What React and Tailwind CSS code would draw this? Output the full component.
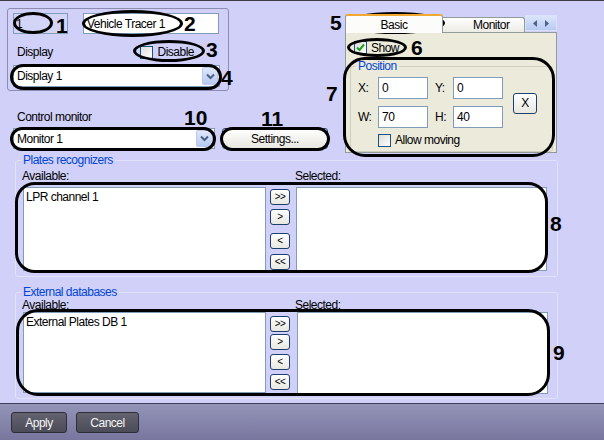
import React from "react";

function XPButton({ className = "", children }) {
  return (
    <div
      className={`flex items-center justify-center rounded-[3px] border border-[#1d3f6e] bg-gradient-to-b from-white to-[#e8e7e0] text-black ${className}`}
    >
      {children}
    </div>
  );
}

function Checkbox({ checked }) {
  return (
    <div className="w-[13px] h-[13px] shrink-0 border border-[#1c5180] bg-gradient-to-br from-[#dcdcd7] to-white flex items-center justify-center">
      {checked && (
        <svg width="9" height="9" viewBox="0 0 9 9">
          <path d="M1 4.5 L3.5 7 L8 1.5" stroke="#21a121" strokeWidth="2" fill="none" />
        </svg>
      )}
    </div>
  );
}

function DropBtn({ className = "" }) {
  return (
    <div
      className={`flex items-center justify-center rounded-[2px] border border-[#b9c9ef] bg-gradient-to-b from-[#dfe7fb] to-[#b8caf2] ${className}`}
    >
      <svg width="9" height="7" viewBox="0 0 9 7">
        <path d="M1 1.5 L4.5 5 L8 1.5" stroke="#4d6185" strokeWidth="2" fill="none" />
      </svg>
    </div>
  );
}

function Ring({ className = "" }) {
  return <div className={`absolute border-[3px] border-black pointer-events-none ${className}`} />;
}

function Num({ className = "", children }) {
  return (
    <div className={`absolute text-[21px] leading-none font-bold tracking-normal text-black ${className}`}>
      {children}
    </div>
  );
}

function ListButtons({ gaps }) {
  const labels = [">>", ">", "<", "<<"];
  return (
    <div className="flex flex-col w-[20px] ml-[4px]">
      <XPButton className={`h-[16px] text-[10px] ${gaps[0]}`}>{labels[0]}</XPButton>
      <XPButton className={`h-[16px] text-[10px] ${gaps[1]}`}>{labels[1]}</XPButton>
      <XPButton className={`h-[16px] text-[10px] ${gaps[2]}`}>{labels[2]}</XPButton>
      <XPButton className={`h-[16px] text-[10px] ${gaps[3]}`}>{labels[3]}</XPButton>
    </div>
  );
}

export default function App() {
  return (
    <div className="relative w-[604px] h-[442px] overflow-hidden bg-[#d0d0f8] text-[12px] leading-[14px] tracking-[-0.5px] text-black font-['Liberation_Sans',Arial,sans-serif]">
      <div className="h-px bg-[#3c3c48]" />

      {/* Top area */}
      <div className="flex h-[152px]">
        <div className="w-[345px] flex flex-col pl-[7px] pt-[7px]">
          {/* Name group */}
          <div className="w-[222px] h-[83px] border border-[#8c8cb0] rounded-[3px] px-[5px] pt-[4px]">
            <div className="flex">
              <div className="w-[55px] h-[21px] border border-[#7f9db9] bg-[#d4d4f8] pl-[2px] flex items-center">1</div>
              <div className="w-[136px] h-[21px] ml-[15px] border border-[#7f9db9] bg-white pl-[3px] flex items-center">
                Vehicle Tracer 1
              </div>
            </div>
            <div className="flex items-center h-[14px] mt-[11px]">
              <span className="pl-[4px]">Display</span>
              <div className="ml-auto mr-[29px] flex items-center">
                <Checkbox />
                <span className="ml-[4px]">Disable</span>
              </div>
            </div>
            <div className="mt-[6px] w-[207px] h-[22px] border border-[#7f9db9] bg-white flex items-center pl-[3px] pr-[1px]">
              <span className="flex-1">Display 1</span>
              <DropBtn className="w-[16px] h-[18px]" />
            </div>
          </div>

          <div className="mt-[19px] ml-[10px]">Control monitor</div>
          <div className="flex mt-[4px] ml-[6px]">
            <div className="w-[202px] h-[21px] border border-[#7f9db9] bg-white flex items-center pl-[3px] pr-[1px]">
              <span className="flex-1">Monitor 1</span>
              <DropBtn className="w-[17px] h-[17px]" />
            </div>
            <XPButton className="ml-[7px] w-[106px] h-[21px]">Settings...</XPButton>
          </div>
        </div>

        {/* Tab control */}
        <div className="w-[212px] mt-[13px] flex flex-col">
          <div className="flex items-start h-[18px]">
            <div className="relative z-10 w-[98px] h-[19px] bg-[#fcfcfa] border-x border-[#919b9c] border-t-[2px] border-t-[#f0a830] rounded-t-[3px] flex items-center justify-center">
              Basic
            </div>
            <div className="mt-[3px] w-[82px] h-[15px] bg-gradient-to-b from-white to-[#ecebe5] border-t border-r border-[#919b9c] rounded-tr-[3px] flex items-center pl-[30px]">
              Monitor
            </div>
            <div className="mt-[1px] w-[32px] h-[16px] border border-[#d8e2f8] bg-gradient-to-b from-[#dbe5fb] to-[#b7cbf3] flex items-center justify-center gap-[8px]">
              <svg width="4" height="7" viewBox="0 0 4 7"><path d="M4 0 L0 3.5 L4 7 Z" fill="#4d6185" /></svg>
              <svg width="4" height="7" viewBox="0 0 4 7"><path d="M0 0 L4 3.5 L0 7 Z" fill="#4d6185" /></svg>
            </div>
          </div>
          <div className="h-[125px] border border-[#919b9c] bg-[#eceadb] pl-[4px] pt-[8px]">
            <div className="flex items-center h-[13px] ml-[4px]">
              <Checkbox checked />
              <span className="ml-[4px]">Show</span>
            </div>
            <fieldset className="mt-[5px] w-[203px] h-[93px] border border-[#d0d0bf] rounded-[3px]">
              <legend className="ml-[5px] px-[2px] text-[#0046d5]">Position</legend>
              <div className="flex items-center mt-[4px] pl-[7px]">
                <div className="flex flex-col">
                  <div className="flex items-center">
                    <span className="w-[20px]">X:</span>
                    <div className="w-[50px] h-[22px] border border-[#7f9db9] bg-white pl-[3px] flex items-center">0</div>
                    <span className="w-[18px] ml-[7px]">Y:</span>
                    <div className="w-[50px] h-[22px] border border-[#7f9db9] bg-white pl-[3px] flex items-center">0</div>
                  </div>
                  <div className="flex items-center mt-[7px]">
                    <span className="w-[20px]">W:</span>
                    <div className="w-[50px] h-[22px] border border-[#7f9db9] bg-white pl-[3px] flex items-center">70</div>
                    <span className="w-[18px] ml-[7px]">H:</span>
                    <div className="w-[50px] h-[22px] border border-[#7f9db9] bg-white pl-[3px] flex items-center">40</div>
                  </div>
                </div>
                <XPButton className="ml-[10px] w-[24px] h-[21px] mt-[1px]">X</XPButton>
              </div>
              <div className="flex items-center mt-[5px] pl-[27px]">
                <Checkbox />
                <span className="ml-[4px]">Allow moving</span>
              </div>
            </fieldset>
          </div>
        </div>
      </div>

      {/* Plates recognizers */}
      <fieldset className="ml-[15px] w-[543px] h-[124px] border border-[#e2e2fb] rounded-[3px]">
        <legend className="ml-[5px] px-[2px] text-[#0046d5]">Plates recognizers</legend>
        <div className="flex mt-[2px] pl-[6px]">
          <span className="w-[273px]">Available:</span>
          <span>Selected:</span>
        </div>
        <div className="flex mt-[4px] pl-[7px]">
          <div className="w-[243px] h-[84px] border border-[#7f9db9] bg-white pl-[2px] pt-[2px]">LPR channel 1</div>
          <ListButtons gaps={["mt-[2px]", "mt-[4px]", "mt-[8px]", "mt-[5px]"]} />
          <div className="ml-[6px] w-[251px] h-[84px] border border-[#7f9db9] bg-white" />
        </div>
      </fieldset>

      {/* External databases */}
      <fieldset className="mt-[9px] ml-[15px] w-[543px] h-[113px] border border-[#e2e2fb] rounded-[3px]">
        <legend className="ml-[5px] px-[2px] text-[#0046d5] leading-[13px]">External databases</legend>
        <div className="flex pl-[6px] leading-[12px]">
          <span className="w-[273px]">Available:</span>
          <span>Selected:</span>
        </div>
        <div className="flex mt-[1px] pl-[7px]">
          <div className="w-[243px] h-[81px] border border-[#7f9db9] bg-white pl-[2px] pt-[2px]">External Plates DB 1</div>
          <ListButtons gaps={["mt-[4px]", "mt-[2px]", "mt-[4px]", "mt-[4px]"]} />
          <div className="ml-[7px] w-[251px] h-[82px] border border-[#7f9db9] bg-white" />
        </div>
      </fieldset>

      {/* Bottom bar */}
      <div className="mt-[4px] h-[37px] border-t border-[#404058] bg-gradient-to-b from-[#9494b8] to-[#78769e] flex items-start pl-[11px] pt-[8px] gap-[9px]">
        <div className="w-[56px] h-[21px] rounded-[3px] border border-[#2e2e3a] bg-gradient-to-b from-[#63636f] to-[#4c4c58] text-[#f4f4f4] flex items-center justify-center">
          Apply
        </div>
        <div className="w-[63px] h-[21px] rounded-[3px] border border-[#2e2e3a] bg-gradient-to-b from-[#63636f] to-[#4c4c58] text-[#f4f4f4] flex items-center justify-center">
          Cancel
        </div>
      </div>
      <div className="h-[2px] bg-white" />

      {/* Annotations */}
      <Ring className="left-[13px] top-[12px] w-[40px] h-[22px] rounded-[50%]" />
      <Ring className="left-[82px] top-[10px] w-[101px] h-[27px] rounded-[50%]" />
      <Ring className="left-[133px] top-[40px] w-[72px] h-[22px] rounded-[50%]" />
      <Ring className="left-[10px] top-[64px] w-[212px] h-[26px] rounded-full" />
      <Ring className="left-[345px] top-[12px] w-[100px] h-[22px] rounded-[50%]" />
      <Ring className="left-[347px] top-[38px] w-[60px] h-[19px] rounded-[50%]" />
      <Ring className="left-[343px] top-[57px] w-[212px] h-[100px] rounded-[22px]" />
      <Ring className="left-[10px] top-[127px] w-[206px] h-[24px] rounded-full" />
      <Ring className="left-[220px] top-[127px] w-[110px] h-[24px] rounded-full" />
      <Ring className="left-[15px] top-[182px] w-[533px] h-[91px] rounded-[20px]" />
      <Ring className="left-[16px] top-[309px] w-[534px] h-[87px] rounded-[22px]" />

      <Num className="left-[56px] top-[15px]">1</Num>
      <Num className="left-[184px] top-[13px]">2</Num>
      <Num className="left-[206px] top-[39px]">3</Num>
      <Num className="left-[221px] top-[67px]">4</Num>
      <Num className="left-[330px] top-[12px]">5</Num>
      <Num className="left-[411px] top-[37px]">6</Num>
      <Num className="left-[326px] top-[83px]">7</Num>
      <Num className="left-[550px] top-[213px]">8</Num>
      <Num className="left-[553px] top-[342px]">9</Num>
      <Num className="left-[184px] top-[107px]">10</Num>
      <Num className="left-[261px] top-[108px]">11</Num>
    </div>
  );
}
